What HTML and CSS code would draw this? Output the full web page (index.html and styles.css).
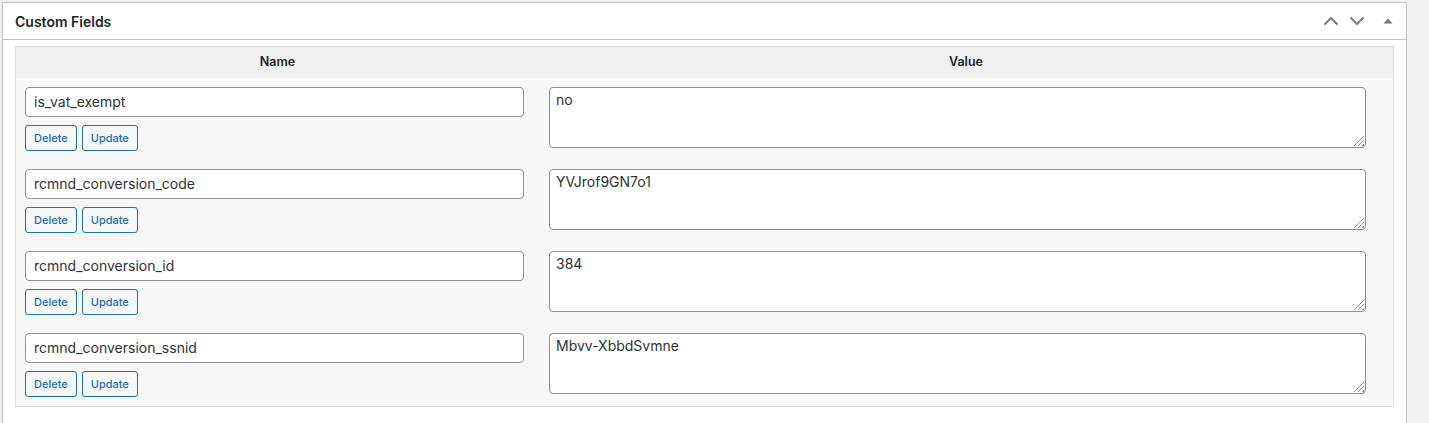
FILE: index.html
```html
<!DOCTYPE html>
<html>
<head>
<meta charset="utf-8">
<link rel="stylesheet" href="styles.css">
</head>
<body>
<div class="postbox">
  <div class="postbox-header">
    <h2 class="title">Custom Fields</h2>
    <div class="controls">
      <button class="ctl" aria-label="Move up">
        <svg width="16" height="10" viewBox="0 0 16 10"><path d="M1.5 8.5 L8 2 L14.5 8.5" fill="none" stroke="#787c82" stroke-width="2"/></svg>
      </button>
      <button class="ctl" aria-label="Move down">
        <svg width="16" height="10" viewBox="0 0 16 10"><path d="M1.5 1.5 L8 8 L14.5 1.5" fill="none" stroke="#787c82" stroke-width="2"/></svg>
      </button>
      <button class="ctl ctl-toggle" aria-label="Toggle panel">
        <svg width="10" height="6" viewBox="0 0 10 6"><path d="M0.5 5.5 L5 0.5 L9.5 5.5 Z" fill="#787c82"/></svg>
      </button>
    </div>
  </div>
  <div class="inside">
    <div class="list-table">
      <div class="thead">
        <div class="th th-left">Name</div>
        <div class="th th-right">Value</div>
      </div>
      <div class="row">
        <div class="cell-left">
          <div class="input">is_vat_exempt</div>
          <div class="actions"><span class="btn">Delete</span><span class="btn">Update</span></div>
        </div>
        <div class="cell-right"><div class="textarea">no<span class="grip"></span></div></div>
      </div>
      <div class="row">
        <div class="cell-left">
          <div class="input">rcmnd_conversion_code</div>
          <div class="actions"><span class="btn">Delete</span><span class="btn">Update</span></div>
        </div>
        <div class="cell-right"><div class="textarea">YVJrof9GN7o1<span class="grip"></span></div></div>
      </div>
      <div class="row">
        <div class="cell-left">
          <div class="input">rcmnd_conversion_id</div>
          <div class="actions"><span class="btn">Delete</span><span class="btn">Update</span></div>
        </div>
        <div class="cell-right"><div class="textarea">384<span class="grip"></span></div></div>
      </div>
      <div class="row">
        <div class="cell-left">
          <div class="input">rcmnd_conversion_ssnid</div>
          <div class="actions"><span class="btn">Delete</span><span class="btn">Update</span></div>
        </div>
        <div class="cell-right"><div class="textarea">Mbvv-XbbdSvmne<span class="grip"></span></div></div>
      </div>
    </div>
  </div>
</div>
</body>
</html>
```
FILE: styles.css
```css
html, body {
  margin: 0;
  padding: 0;
}
body {
  background: #f0f0f1;
  font-family: Inter, "Liberation Sans", Arial, sans-serif;
  color: #1d2327;
  font-size: 13px;
  padding: 2px 0 0 2px;
  height: 421px;
  overflow: hidden;
}
.postbox {
  width: 1403px;
  background: #fff;
  border: 1px solid #c3c4c7;
  height: 440px;
}
.postbox-header {
  height: 36px;
  border-bottom: 1px solid #c3c4c7;
  display: flex;
  align-items: center;
  justify-content: space-between;
}
.title {
  margin: 0;
  padding: 2px 12px 0;
  font-size: 14px;
  font-weight: 600;
  line-height: 1.4;
  color: #1d2327;
}
.controls {
  display: flex;
  align-items: center;
  padding-right: 0;
  height: 36px;
}
.ctl {
  border: 0;
  background: none;
  padding: 0;
  margin: 0;
  width: 26px;
  height: 36px;
  display: flex;
  align-items: center;
  justify-content: center;
}
.ctl-toggle {
  width: 36px;
}
.ctl svg { display: block; }
.inside {
  padding: 6px 12px 12px;
}
.list-table {
  border: 1px solid #dcdcde;
  background: #f6f7f7;
}
.thead {
  display: flex;
  background: #f0f0f1;
  height: 31px;
}
.th {
  font-weight: 600;
  font-size: 12.5px;
  text-align: center;
  padding: 6px 8px 0;
  box-sizing: border-box;
  color: #1d2327;
  line-height: 17px;
}
.th-left { width: 523px; }
.th-right { flex: 1; }
.row {
  display: flex;
  height: 82px;
}
.cell-left {
  width: 523px;
  padding: 9px 0 0 9px;
  box-sizing: border-box;
}
.cell-right {
  flex: 1;
  padding: 9px 0 0 10px;
  box-sizing: border-box;
}
.input {
  width: 499px;
  height: 30px;
  box-sizing: border-box;
  border: 1px solid #8c8f94;
  border-radius: 4px;
  background: #fff;
  font-size: 14px;
  color: #2c3338;
  padding: 0 8px;
  line-height: 28px;
}
.actions {
  display: flex;
  gap: 5px;
  margin-top: 8px;
}
.btn {
  display: inline-block;
  height: 26px;
  box-sizing: border-box;
  border: 1px solid #2271b1;
  border-radius: 3px;
  background: #f6f7f7;
  color: #2271b1;
  font-size: 11px;
  font-weight: 500;
  line-height: 24px;
  padding: 0 8px;
}
.textarea {
  position: relative;
  width: 817px;
  height: 61px;
  box-sizing: border-box;
  border: 1px solid #8c8f94;
  border-radius: 4px;
  background: #fff;
  font-size: 14px;
  color: #2c3338;
  padding: 2px 6px;
  line-height: 20px;
}
.grip {
  position: absolute;
  right: 1px;
  bottom: 1px;
  width: 11px;
  height: 11px;
  background: repeating-linear-gradient(135deg, transparent 0 2px, #9a9a9a 2px 3px);
  clip-path: polygon(100% 0, 100% 100%, 0 100%);
}
```
